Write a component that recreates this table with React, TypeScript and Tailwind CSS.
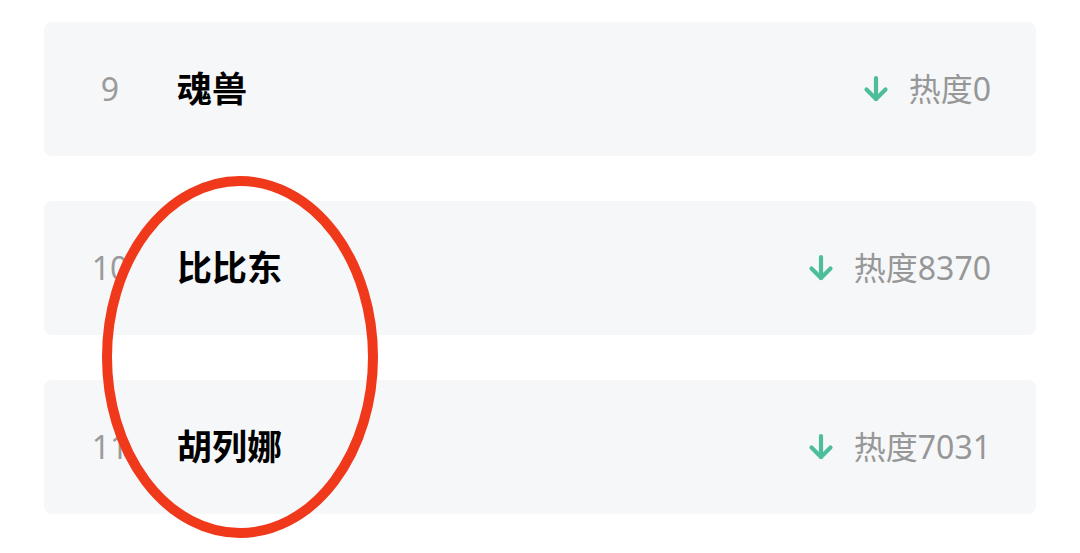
import React from "react";

const rows = [
  { rank: 9, name: "魂兽", heat: 0 },
  { rank: 10, name: "比比东", heat: 8370 },
  { rank: 11, name: "胡列娜", heat: 7031 },
];

const ArrowDown = () => (
  <svg width="28" height="28" viewBox="0 0 28 28" fill="none" stroke="#4dbd9c" strokeWidth="4.2" strokeLinecap="round" strokeLinejoin="round">
    <path d="M14 3v21" />
    <path d="M4.5 14.5L14 24l9.5-9.5" />
  </svg>
);

export default function App() {
  return (
    <div
      className="relative min-h-[553px] w-[1080px] bg-white px-[44px] pt-[22px]"
      style={{ fontFamily: '"Noto Sans", "Noto Sans CJK SC", sans-serif' }}
    >
      <div className="flex flex-col gap-[45px]">
        {rows.map((r) => (
          <div
            key={r.rank}
            className="flex h-[134px] items-center rounded-[8px] bg-[#f6f7f9] pl-[36px] pr-[45px]"
          >
            <span className="w-[60px] text-center text-[32px] text-[#9b9b9b]">{r.rank}</span>
            <span className="ml-[37px] text-[35px] font-bold text-black">{r.name}</span>
            <div className="ml-auto flex items-center gap-[19px]">
              <ArrowDown />
              <span className="text-[32px] text-[#979797]">热度{r.heat}</span>
            </div>
          </div>
        ))}
      </div>

      <svg className="pointer-events-none absolute left-0 top-0" width="1080" height="553">
        <ellipse cx="240" cy="357" rx="133" ry="176" fill="none" stroke="#f0381a" strokeWidth="10" />
      </svg>
    </div>
  );
}
